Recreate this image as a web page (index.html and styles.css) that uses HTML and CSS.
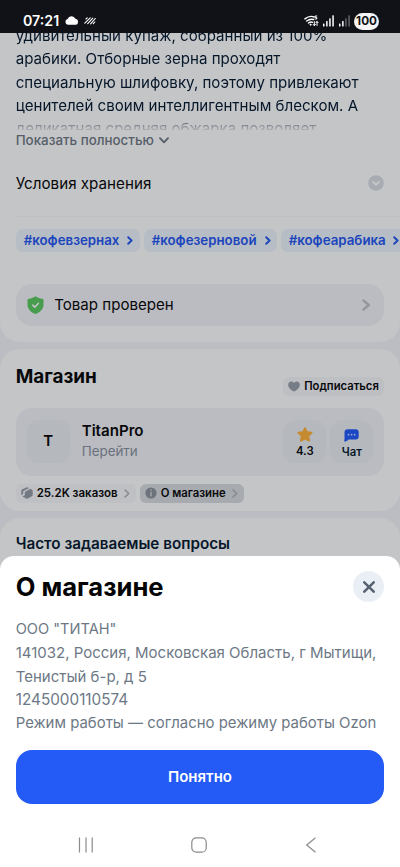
FILE: index.html
```html
<!DOCTYPE html>
<html lang="ru">
<head>
<meta charset="utf-8">
<meta name="viewport" content="width=device-width, initial-scale=1">
<title>О магазине</title>
<link rel="stylesheet" href="styles.css">
</head>
<body>
<div class="screen">
  <header class="status">
    <span class="time">07:21</span>
    <svg class="cloud" width="14" height="9" viewBox="0 0 14 9"><path fill="#fff" d="M3 8.800a2.900 2.900 0 0 1-.4-5.700A4.200 4.200 0 0 1 10.400 2.800a3.100 3.100 0 0 1 .6 6z"/></svg>
    <svg class="slashes" width="12" height="8" viewBox="0 0 12 8" stroke="#fff" stroke-width="1.100" stroke-linecap="round" fill="none"><path d="M3.200.8 2 2M6.200.8.8 6.200M8.800 1.200 3.700 6.600M11.300 1.500 6.600 6.800M10.800 5 9.300 6.700"/></svg>
    <svg class="wifi" width="15" height="12" viewBox="0 0 15 12" fill="none" stroke="#fff" stroke-width="1.400" stroke-linecap="round"><path d="M.9 3.900Q5.500.2 10.200 2M2.700 6Q6 3.400 9.500 4.500M4.500 8Q6.500 6.600 8.500 7.300"/><circle cx="6.500" cy="9.700" r=".6" fill="#fff" stroke-width=".8"/><path stroke-width="1" d="M12.800 1h-1.600v1.500h1.600V4h-1.800M10.300 6.500v4M9.200 9.400l1.100 1.300 1.100-1.300M13 10.500v-4M11.900 7.700 13 6.500l1.100 1.200"/></svg>
    <svg class="signal" width="12" height="12" viewBox="0 0 12 12" fill="#fff"><rect y="8.500" width="1.500" height="3" rx=".5"/><rect x="3.100" y="6" width="1.500" height="5.500" rx=".5"/><rect x="6.200" y="3.300" width="1.500" height="8.200" rx=".5"/><rect x="9.300" y=".3" width="1.500" height="11.200" rx=".5"/></svg>
    <svg class="signal second" width="12" height="12" viewBox="0 0 12 12" fill="#fff"><rect y="8.500" width="1.500" height="3" rx=".5"/><rect x="3.100" y="6" width="1.500" height="5.500" rx=".5"/><rect x="6.200" y="3.300" width="1.500" height="8.200" rx=".5" opacity=".35"/><rect x="9.300" y=".3" width="1.500" height="11.200" rx=".5" opacity=".35"/></svg>
    <span class="battery">100</span>
  </header>

  <main class="page">
    <section class="card first">
      <div class="clip"><p class="about">удивительный купаж, собранный из 100%<br>арабики. Отборные зерна проходят<br>специальную шлифовку, поэтому привлекают<br>ценителей своим интеллигентным блеском. А<br>деликатная средняя обжарка позволяет</p></div>
      <div class="more">Показать полностью
        <svg width="10" height="7" viewBox="0 0 10 7"><path d="M1 1.200 5 5.300 9 1.200" fill="none" stroke="#555e69" stroke-width="1.900" stroke-linecap="round" stroke-linejoin="round"/></svg>
      </div>
      <div class="storage">Условия хранения
        <svg width="16" height="16" viewBox="0 0 16 16"><circle cx="8" cy="8" r="7.800" fill="#a9adb3"/><path d="M5 7l3 2.800L11 7" fill="none" stroke="#c4c5c7" stroke-width="1.900" stroke-linecap="round" stroke-linejoin="round"/></svg>
      </div>
      <div class="tags">
        <span class="tag">#кофевзернах<svg width="6" height="9" viewBox="0 0 6 9"><path d="M1.200 1.200 4.600 4.500 1.200 7.800"/></svg></span>
        <span class="tag wide">#кофезерновой<svg width="6" height="9" viewBox="0 0 6 9"><path d="M1.200 1.200 4.600 4.500 1.200 7.800"/></svg></span>
        <span class="tag last">#кофеарабика<svg width="6" height="9" viewBox="0 0 6 9"><path d="M1.200 1.200 4.600 4.500 1.200 7.800"/></svg></span>
      </div>
      <div class="verified">
        <svg width="17" height="18" viewBox="0 0 17 18"><path fill="#479c4d" d="M8.500.2c2.400 1.700 4.600 2.300 6.700 2.500.8.100 1.300.6 1.300 1.400v4.600c0 4.200-3.200 7.700-8 9.200C3.700 16.400.5 12.900.5 8.700V4.100c0-.8.500-1.300 1.300-1.400C3.900 2.500 6.100 1.900 8.500.2z"/><path d="M5.700 9.200l2.100 2 3.600-3.900" fill="none" stroke="#c4c5c7" stroke-width="1.600" stroke-linecap="round" stroke-linejoin="round"/></svg>
        <span>Товар проверен</span>
        <svg class="go" width="9" height="12" viewBox="0 0 9 12"><path d="M1.500 1.500 6.800 6 1.500 10.500" fill="none" stroke="#94989d" stroke-width="2.500" stroke-linecap="round" stroke-linejoin="round"/></svg>
      </div>
    </section>

    <section class="card shop">
      <div class="shop-head">
        <h2>Магазин</h2>
        <span class="follow"><svg width="12" height="11" viewBox="0 0 12 11"><path fill="#777d87" d="M6 10.400C3.400 9.300.2 6.900.2 3.700.2 1.800 1.500.5 3.200.5 4.400.5 5.400 1 6 2 6.600 1 7.600.5 8.800.5c1.700 0 3 1.300 3 3.200 0 3.200-3.200 5.600-5.800 6.700z"/></svg>Подписаться</span>
      </div>
      <div class="seller">
        <span class="avatar">T</span>
        <div class="seller-name"><b>TitanPro</b><span>Перейти</span></div>
        <div class="tile"><svg width="16" height="15" viewBox="0 0 16 15"><path fill="#c58b31" stroke="#c58b31" stroke-width="2" stroke-linejoin="round" d="M8 1.300l1.800 3.800 4.700.6-3.300 3.100.9 4.800L8 11.500l-4.100 2.100.9-4.800L1.500 5.700l4.700-.6z"/></svg>4.3</div>
        <div class="tile chat"><svg width="15" height="13" viewBox="0 0 15 13"><path fill="#1d48c3" d="M3.500.3h8.300c1.800 0 2.900 1 2.900 2.900v4.400c0 1.900-1.100 2.900-2.900 2.900H4.500C3.300 11.900 2 12.600.6 12.600.1 12.600 0 12.200.2 11.800c.3-.6.300-1.100.3-1.900V3.200C.5 1.300 1.700.3 3.500.3z"/><g fill="#9aa9d3"><circle cx="4.500" cy="5.700" r=".9"/><circle cx="7.600" cy="5.700" r=".9"/><circle cx="10.700" cy="5.700" r=".9"/></g></svg>Чат</div>
      </div>
      <div class="facts">
        <span class="fact orders"><svg width="12" height="12" viewBox="0 0 12 12"><path fill="#747a84" d="M5.200.5Q6 .1 6.800.5L8 1.100 2.200 4.300V7L.3 8.200V4q0-.9.8-1.400zM9.300 1.800l1.600.9q.8.500.8 1.300V8q0 .8-.8 1.300L6.900 11.600q-.9.400-1.800 0L1.500 9.500 3.800 8.200V5z"/></svg><span>25.2K заказов</span><svg class="arrow" width="6" height="9" viewBox="0 0 6 9"><path d="M1 1l3.700 3.500L1 8"/></svg></span>
        <span class="fact active"><svg width="12" height="12" viewBox="0 0 12 12"><circle cx="6" cy="6" r="5.600" fill="#6c737c"/><path d="M6 5.500v3.300M6 3v.3" stroke="#a7abb0" stroke-width="1.400" stroke-linecap="round"/></svg><span>О магазине</span><svg class="arrow" width="6" height="9" viewBox="0 0 6 9"><path d="M1 1l3.700 3.500L1 8"/></svg></span>
      </div>
    </section>

    <section class="card faq"><h3>Часто задаваемые вопросы</h3></section>
  </main>

  <section class="sheet">
    <div class="sheet-head">
      <h1>О магазине</h1>
      <span class="close"><svg width="12" height="12" viewBox="0 0 12 12"><path d="M1.300 1.300l9.400 9.400M10.700 1.300l-9.400 9.400" stroke="#566270" stroke-width="2.500" stroke-linecap="round"/></svg></span>
    </div>
    <div class="info">
      <p class="org">ООО "ТИТАН"</p>
      <p>141032, Россия, Московская Область, г Мытищи,</p>
      <p>Тенистый б-р, д 5</p>
      <p class="ogrn">1245000110574</p>
      <p class="hours">Режим работы — согласно режиму работы Ozon</p>
    </div>
    <div class="button">Понятно</div>
    <nav class="nav">
      <svg width="16" height="16" viewBox="0 0 16 16"><path d="M1.500.5v15M8 .5v15M14.200.5v15"/></svg>
      <svg width="16" height="16" viewBox="0 0 16 16"><rect x=".8" y=".8" width="14.400" height="14.400" rx="4.500"/></svg>
      <svg width="16" height="16" viewBox="0 0 16 16"><path d="M12.500.8 3.700 8l8.800 7.200"/></svg>
    </nav>
  </section>
</div>
</body>
</html>
```
FILE: styles.css
```css
* { box-sizing: border-box; }
body, h1, h2, h3, p { margin: 0; }
body { font-family: Inter, "Liberation Sans", sans-serif; background: #bcbdc2; color: #08090b; }
svg { display: block; flex: none; }
.screen { width: 400px; height: 867px; display: flex; flex-direction: column; overflow: hidden; white-space: nowrap; }

.status { height: 33px; flex: none; background: #111217; color: #fff; display: flex; align-items: center; padding: 9px 21px 0 23px; }
.time { font-size: 14.2px; font-weight: 600; line-height: 24px; width: 42px; }
.cloud { margin-top: -1px; }
.slashes { margin-left: 5px; }
.wifi { margin-left: auto; }
.signal { margin-left: 4px; }
.second { margin-left: 4px; }
.battery { width: 25px; height: 17px; margin-left: 3px; border-radius: 9px; background: #f4f4f5; color: #111217; font-size: 11.7px; font-weight: 700; line-height: 17px; text-align: center; }

.page { height: 537px; flex: none; overflow: hidden; }
.card { background: #c4c5c7; border-radius: 20px; padding: 0 15.7px; }
.first { height: 309px; border-radius: 0 0 20px 20px; overflow: hidden; }
.clip { height: 97px; overflow: hidden; -webkit-mask-image: linear-gradient(#000 78px, rgba(0, 0, 0, .12) 97px); mask-image: linear-gradient(#000 78px, rgba(0, 0, 0, .12) 97px); }
.about { margin-top: -9px; font-size: 15.1px; line-height: 23.35px; color: #07172a; }
.more { display: flex; align-items: center; gap: 5px; height: 20px; font-size: 13.35px; font-weight: 500; color: #555e69; }
.storage { display: flex; align-items: center; justify-content: space-between; height: 67px; font-size: 15.2px; border-bottom: 1px solid #bdbfc3; margin-right: -16px; padding-right: 16px; }
.tags { display: flex; gap: 4px; margin-top: 12px; }
.tag { flex: none; display: flex; align-items: center; justify-content: space-between; width: 124px; height: 23px; padding: 0 6.5px 1px 8px; border-radius: 7px; background: #b6bdc5; color: #1c45bd; font-size: 13.3px; font-weight: 600; }
.tag path { fill: none; stroke: #1c45bd; stroke-width: 1.9; stroke-linecap: round; stroke-linejoin: round; }
.wide { width: 133.5px; }
.last { width: 125px; padding-right: 7px; padding-left: 7.5px; }
.verified { display: flex; align-items: center; height: 42.5px; margin-top: 31.5px; padding: 0 13.5px 0 11px; border-radius: 16px; background: #bbbcc1; font-size: 15.1px; }
.verified span { margin-left: 10.5px; }
.go { margin-left: auto; }

.shop { height: 162px; margin-top: 7px; padding-top: 16px; }
.shop-head { display: flex; justify-content: space-between; height: 43px; }
h2 { font-size: 18.9px; line-height: 23px; font-weight: 700; }
.follow { display: flex; align-items: center; gap: 4px; height: 19px; margin-top: 12px; padding: 0 5.5px 1px 5px; border-radius: 6px; background: #bebfc3; font-size: 11.25px; font-weight: 600; }
.seller { display: flex; align-items: center; height: 67.5px; padding: 0 11px; border-radius: 16px; background: #bbbcc1; }
.avatar { width: 43px; height: 43px; margin-top: -1px; padding-bottom: 1px; border-radius: 11px; background: #b5b9be; display: flex; align-items: center; justify-content: center; font-size: 15px; font-weight: 600; }
.seller-name { display: flex; flex-direction: column; margin: -1px 0 0 12px; flex: 1; line-height: 21px; color: #6a717c; font-size: 13.4px; }
.seller-name b { color: #08090b; font-size: 15.1px; font-weight: 600; }
.tile { display: flex; flex-direction: column; align-items: center; width: 43px; height: 43px; margin-left: 4px; padding-top: 6.5px; border-radius: 12px; background: #b5b9be; font-size: 11.3px; line-height: 18px; font-weight: 600; }
.chat { padding-top: 9px; line-height: 20px; color: #07172a; }
.facts { display: flex; gap: 4px; margin-top: 8px; }
.fact { display: flex; align-items: center; height: 19.5px; width: 120px; padding: 0 6px 0 5px; border-radius: 6px; background: #bfc0c4; font-size: 11.5px; font-weight: 600; }
.fact span { margin-left: 4px; flex: 1; }
.active { width: 104.5px; background: #a7abb0; font-size: 11.35px; }
.arrow path { fill: none; stroke: #858a91; stroke-width: 1.5; stroke-linecap: round; stroke-linejoin: round; }

.faq { height: 70px; margin-top: 7px; padding-top: 15px; }
h3 { font-size: 15.25px; line-height: 22px; font-weight: 600; color: #07172a; }

.sheet { flex: 1; margin-top: -14px; z-index: 1; display: flex; flex-direction: column; padding: 15px 15.7px 0; background: #fff; border-radius: 14px 14px 0 0; }
.sheet-head { display: flex; justify-content: space-between; align-items: center; height: 31.5px; }
h1 { font-size: 25.6px; font-weight: 700; line-height: 31px; color: #050505; }
.close { width: 31px; height: 31px; border-radius: 50%; background: #eaeff5; display: flex; align-items: center; justify-content: center; }
.info { margin-top: 15.5px; font-size: 15px; line-height: 23.4px; color: #6d7885; }
.org { font-size: 14.6px; }
.ogrn { font-size: 15.3px; }
.hours { font-size: 14.95px; }
.button { height: 54px; flex: none; margin-top: 15.3px; border-radius: 16px; background: #245bf6; color: #fff; font-size: 15px; font-weight: 600; line-height: 54px; text-align: center; }
.nav { display: flex; justify-content: space-between; margin-top: 32.5px; padding: 0 65.5px 0 62.5px; }
.nav svg { fill: none; stroke: #8b8b8b; stroke-width: 1.2; }
```
